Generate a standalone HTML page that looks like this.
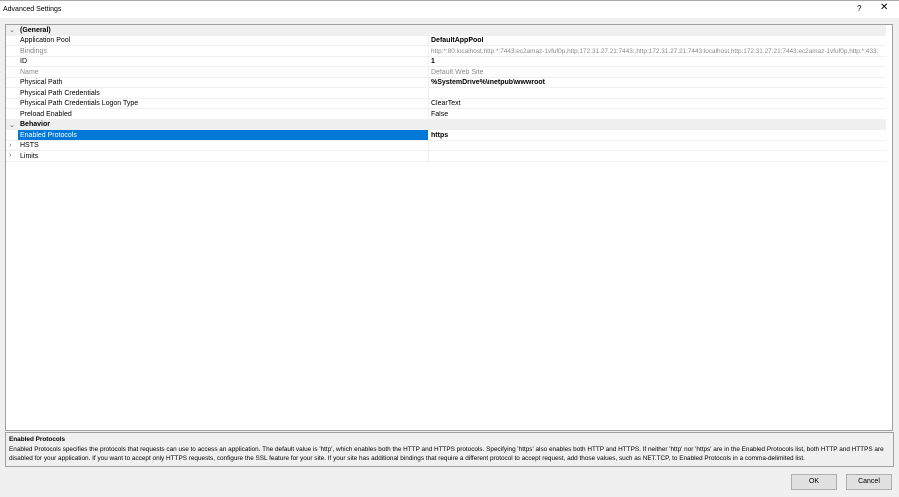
<!DOCTYPE html>
<html><head><style>
body{margin:0;width:899px;height:497px;background:#f0f0f0;font-family:"Liberation Sans",sans-serif;font-size:7px;color:#000;position:relative;overflow:hidden}
.title{position:absolute;left:0;top:0;width:899px;height:17px;background:#fff;border-top:1px solid #aaa}
.title span{position:absolute;left:3px;top:5px;font-size:7px}
.grid{position:absolute;left:5px;top:24px;width:886px;height:405px;background:#fff;border:1px solid #a0a0a0}
.row{position:absolute;left:0;width:880px;height:10.5px;border-bottom:1px solid #f0f0f0;box-sizing:border-box}
.row .n{position:absolute;left:14px;top:1.5px;white-space:nowrap}
.row .v{position:absolute;left:425px;top:1.5px;white-space:nowrap;overflow:hidden;width:454px}
.row .d{position:absolute;left:422px;top:0;width:1px;height:10px;background:#f0f0f0}
.cat{background:#f0f0f0}
.cat .n{left:14px;font-weight:bold}
.g{color:#8a8a8a}
.b{font-weight:bold}
.sel{position:absolute;left:12px;top:0;width:410px;height:10px;background:#0078d7}
.arr{position:absolute;left:3px;top:1px;color:#666;font-size:7px}
.desc{position:absolute;left:5px;top:432px;width:881px;height:33px;border:1px solid #a0a0a0;padding:0 3px;line-height:9.5px;font-size:6.4px}
.btn{position:absolute;top:474px;width:44px;height:14px;border:1px solid #adadad;background:#e1e1e1;text-align:center;line-height:14px;font-size:7px}
</style></head><body>
<div class="title"><span>Advanced Settings</span><span style="left:857px;top:3px;font-size:8px">?</span><span style="left:880px;top:1px;font-size:10px">✕</span></div>
<div class="grid">
<div class="row cat" style="top:0"><span class="arr">⌄</span><span class="n">(General)</span></div>
<div class="row" style="top:10.5px"><span class="n">Application Pool</span><span class="d"></span><span class="v b">DefaultAppPool</span></div>
<div class="row" style="top:21px"><span class="n g">Bindings</span><span class="d"></span><span class="v g" style="font-size:6.4px">http:*:80:localhost,http:*:7443:ec2amaz-1vfuf0p,http:172.31.27.21:7443:,http:172.31.27.21:7443:localhost,http:172.31.27.21:7443:ec2amaz-1vfuf0p,http:*:433:</span></div>
<div class="row" style="top:31.5px"><span class="n">ID</span><span class="d"></span><span class="v b">1</span></div>
<div class="row" style="top:42px"><span class="n g">Name</span><span class="d"></span><span class="v g">Default Web Site</span></div>
<div class="row" style="top:52.5px"><span class="n">Physical Path</span><span class="d"></span><span class="v b">%SystemDrive%\inetpub\wwwroot</span></div>
<div class="row" style="top:63px"><span class="n">Physical Path Credentials</span><span class="d"></span><span class="v"></span></div>
<div class="row" style="top:73.5px"><span class="n">Physical Path Credentials Logon Type</span><span class="d"></span><span class="v">ClearText</span></div>
<div class="row" style="top:84px"><span class="n">Preload Enabled</span><span class="d"></span><span class="v">False</span></div>
<div class="row cat" style="top:94.5px"><span class="arr">⌄</span><span class="n">Behavior</span></div>
<div class="row" style="top:105px"><span class="sel"></span><span class="n" style="color:#fff">Enabled Protocols</span><span class="v b">https</span></div>
<div class="row" style="top:115.5px"><span class="arr">›</span><span class="n">HSTS</span><span class="d"></span></div>
<div class="row" style="top:126px"><span class="arr">›</span><span class="n">Limits</span><span class="d"></span></div>
</div>
<div class="desc"><div style="font-weight:bold;margin-top:2px">Enabled Protocols</div>Enabled Protocols specifies the protocols that requests can use to access an application. The default value is 'http', which enables both the HTTP and HTTPS protocols. Specifying 'https' also enables both HTTP and HTTPS. If neither 'http' nor 'https' are in the Enabled Protocols list, both HTTP and HTTPS are disabled for your application. If you want to accept only HTTPS requests, configure the SSL feature for your site. If your site has additional bindings that require a different protocol to accept request, add those values, such as NET.TCP, to Enabled Protocols in a comma-delimited list.</div>
<div class="btn" style="left:791px">OK</div>
<div class="btn" style="left:846px">Cancel</div>
</body></html>
